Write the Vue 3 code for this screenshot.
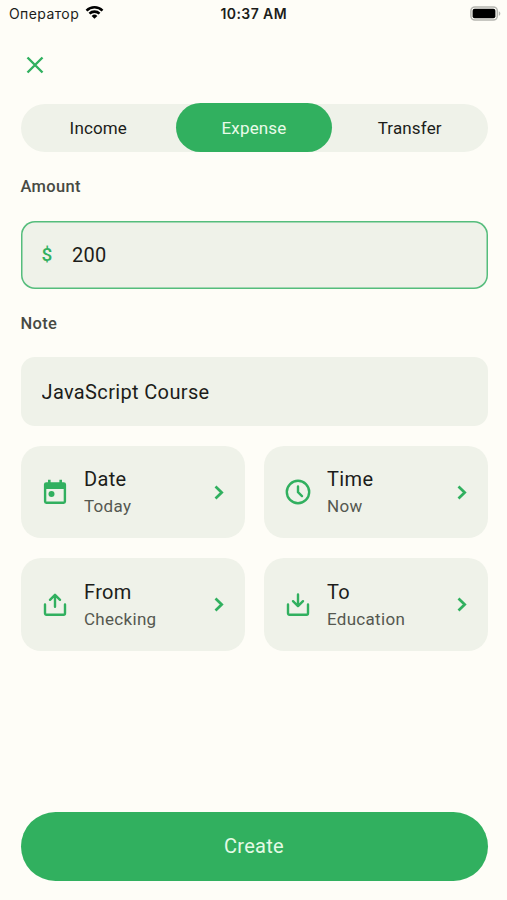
<template>
  <div class="page">
    <header class="status-bar">
      <div class="carrier">
        <span>Оператор</span>
        <svg class="wifi" viewBox="0 0 20 15">
          <path d="M1.6 5.5a12 12 0 0 1 16.8 0" />
          <path d="M4.7 8.7a7.6 7.6 0 0 1 10.6 0" />
          <path class="wifi-dot" d="M10 14.2l-3-3.1a4.3 4.3 0 0 1 6 0z" />
        </svg>
      </div>
      <span class="clock">10:37 AM</span>
      <svg class="battery" viewBox="0 0 31 15">
        <rect class="battery-shell" x="0.9" y="0.9" width="26.4" height="13.2" rx="4" />
        <rect x="2.6" y="2.8" width="22.8" height="9.4" rx="2" />
        <path class="battery-tip" d="M28.8 5.2c2 .8 2 3.8 0 4.6z" />
      </svg>
    </header>

    <button class="close" type="button" aria-label="Close">
      <svg viewBox="0 0 18 18"><path d="M1.5 1.5l15 15M16.5 1.5l-15 15" /></svg>
    </button>

    <nav class="tabs">
      <button
        v-for="tab in tabs"
        :key="tab"
        type="button"
        class="tab"
        :class="{ active: tab === activeTab }"
        @click="activeTab = tab"
      >
        {{ tab }}
      </button>
    </nav>

    <label class="label" for="amount">Amount</label>
    <div class="field focused">
      <span class="currency">$</span>
      <input id="amount" v-model="amount" type="text" inputmode="decimal" />
    </div>

    <label class="label note-label" for="note">Note</label>
    <div class="field">
      <input id="note" v-model="note" class="note-input" type="text" />
    </div>

    <div class="cards">
      <button v-for="card in cards" :key="card.title" type="button" class="card">
        <svg class="card-icon" viewBox="0 0 28 28">
          <template v-if="card.icon === 'calendar'">
            <path
              class="solid"
              fill-rule="evenodd"
              d="M7 1.8h2.6v2.4h8.8V1.8H21v2.4h1.7a2.4 2.4 0 0 1 2.4 2.4v17a2.4 2.4 0 0 1-2.4 2.4H5.3a2.4 2.4 0 0 1-2.4-2.4v-17a2.4 2.4 0 0 1 2.4-2.4H7zM5.3 11v12.6h17.4V11z"
            />
            <circle class="solid" cx="10.5" cy="16.1" r="3" />
          </template>
          <template v-else-if="card.icon === 'clock'">
            <circle cx="14" cy="14" r="11.2" />
            <path d="M14 8.4v5.8l4 3.9" />
          </template>
          <template v-else>
            <path d="M4 13.4v8.9a1.4 1.4 0 0 0 1.4 1.4h17.2a1.4 1.4 0 0 0 1.4-1.4v-8.9" />
            <path v-if="card.icon === 'upload'" d="M14 15.8V4M9 8.8l5-5 5 5" />
            <path v-else d="M14 3.4V15M9 10.2l5 5 5-5" />
          </template>
        </svg>
        <span class="card-text">
          <span class="card-title">{{ card.title }}</span>
          <span class="card-value">{{ card.value }}</span>
        </span>
        <svg class="chevron" viewBox="0 0 10 15"><path d="M1.5 1.5L7.7 7.5l-6.2 6" /></svg>
      </button>
    </div>

    <button class="create" type="button">Create</button>
  </div>
</template>

<script setup>
import { ref } from "vue"

const tabs = ["Income", "Expense", "Transfer"]
const activeTab = ref("Expense")
const amount = ref("200")
const note = ref("JavaScript Course")

const cards = [
  { title: "Date", value: "Today", icon: "calendar" },
  { title: "Time", value: "Now", icon: "clock" },
  { title: "From", value: "Checking", icon: "upload" },
  { title: "To", value: "Education", icon: "download" }
]
</script>

<style>
body {
  background: #fefdf7;
}
</style>

<style scoped>
.page {
  display: flex;
  flex-direction: column;
  box-sizing: border-box;
  height: 900px;
  padding: 0 19.5px 19.5px 20.5px;
  background: #fefdf7;
  color: #1c1d1a;
  font-family: Roboto, sans-serif;
}
button, input {
  border: 0;
  padding: 0;
  background: none;
  color: inherit;
  font-family: inherit;
}
button {
  cursor: pointer;
}
svg {
  display: block;
  fill: none;
}

/* status bar */
.status-bar {
  display: grid;
  grid-template-columns: 1fr auto 1fr;
  align-items: center;
  height: 28px;
  margin: 0 -13px 0 -11.5px;
  font-family: Inter, sans-serif;
  font-size: 14px;
}
.carrier {
  display: flex;
  align-items: center;
  gap: 6px;
  margin-top: -2px;
  letter-spacing: 0.4px;
}
.wifi {
  width: 19px;
  height: 15px;
  margin-top: -1px;
  stroke: #000;
  stroke-width: 2.7;
}
.wifi-dot {
  fill: #000;
  stroke: none;
}
.clock {
  margin: -2px 2px 0 0;
  font-weight: 600;
  letter-spacing: 0.4px;
}
.battery {
  justify-self: end;
  width: 31px;
  height: 15px;
  margin-top: -2px;
  fill: #000;
}
.battery-shell {
  fill: none;
  stroke: #b5b5b0;
  stroke-width: 1.5;
}
.battery-tip {
  fill: #b5b5b0;
}

.close {
  width: 18px;
  height: 18px;
  margin: 27.6px 0 30.4px 5.5px;
}
.close svg {
  width: 18px;
  height: 18px;
  stroke: #31b05f;
  stroke-width: 2.4;
}

.tabs {
  display: flex;
  flex: none;
  height: 48px;
  border-radius: 24px;
  background: #eff2e9;
}
.tab {
  flex: 1;
  border-radius: 24px;
  font-size: 17px;
  letter-spacing: 0.15px;
}
.tab.active {
  height: 49px;
  margin-top: -0.5px;
  border-radius: 25px;
  background: #31b05f;
  color: #e9fbe9;
}

.label {
  margin: 24px 0 23.6px;
  color: #474a44;
  font-size: 16.5px;
  font-weight: 500;
  line-height: 21px;
  letter-spacing: 0.3px;
}
.note-label {
  margin: 23.9px 0 23.4px;
}
.field {
  display: flex;
  flex: none;
  align-items: center;
  box-sizing: border-box;
  height: 68.5px;
  padding: 0 21px;
  border-radius: 14px;
  background: #eff2e9;
  font-size: 20px;
}
.field.focused {
  box-shadow: inset 0 0 0 1.5px #55bd7c;
}
.currency {
  width: 30.6px;
  color: #31b05f;
  font-size: 19px;
  font-weight: 500;
}
.field input {
  flex: 1;
  min-width: 0;
  outline: none;
  font-size: 20px;
  letter-spacing: 0.2px;
}
.field .note-input {
  letter-spacing: 0.35px;
}

.cards {
  display: grid;
  grid-template-columns: 1fr 1fr;
  gap: 20px 19px;
  margin-top: 20.4px;
}
.card {
  display: flex;
  align-items: center;
  height: 92.2px;
  padding: 0 20px;
  border-radius: 20px;
  background: #eff2e9;
  text-align: left;
}
.card-icon {
  width: 28px;
  height: 28px;
  stroke: #31b05f;
  stroke-width: 2.4;
  stroke-linecap: round;
  stroke-linejoin: round;
}
.solid {
  fill: #31b05f;
  stroke: none;
}
.card-text {
  display: flex;
  flex: 1;
  flex-direction: column;
  margin-left: 15.5px;
}
.card-title {
  font-size: 20px;
  line-height: 29px;
  letter-spacing: 0.35px;
}
.card-value {
  color: #555850;
  font-size: 17px;
  line-height: 25px;
  letter-spacing: 0.3px;
}
.chevron {
  width: 10px;
  height: 15px;
  margin-right: 0.8px;
  stroke: #31b05f;
  stroke-width: 2.7;
}

.create {
  height: 68.5px;
  margin-top: auto;
  border-radius: 35px;
  background: #31b05f;
  color: #e4fae5;
  font-size: 20px;
  letter-spacing: 0.3px;
}
</style>
